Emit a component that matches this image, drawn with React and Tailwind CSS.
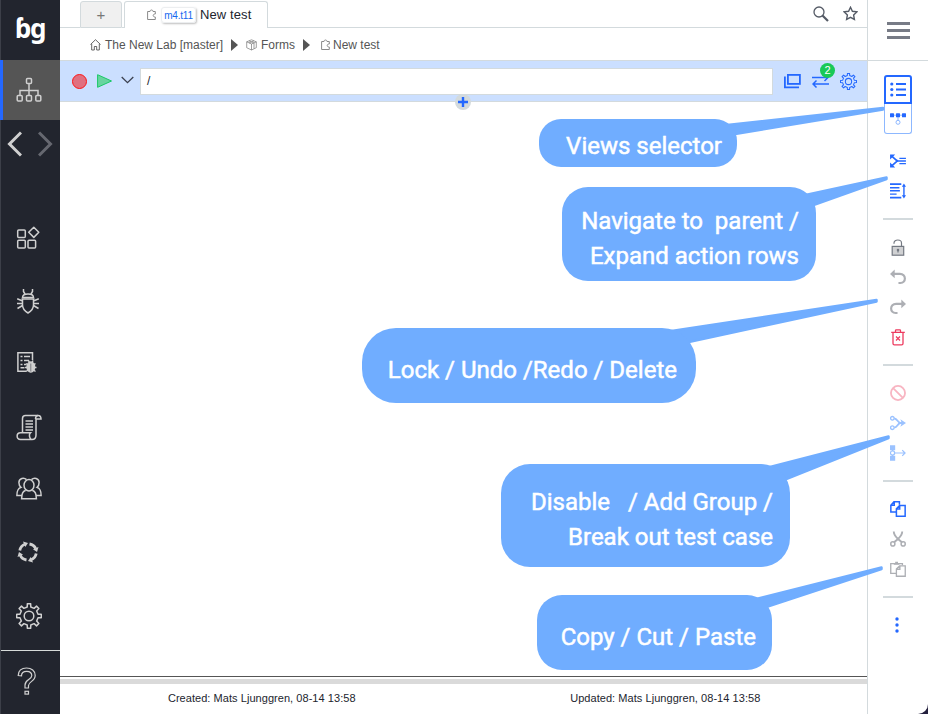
import React from "react";

const Svg = ({ w = 24, h = 24, vb, className = "", children, sw = 1.5 }) => (
  <svg
    width={w}
    height={h}
    viewBox={vb || `0 0 ${w} ${h}`}
    fill="none"
    stroke="currentColor"
    strokeWidth={sw}
    className={`block shrink-0 ${className}`}
  >
    {children}
  </svg>
);

const gearPath = (c, inner, outer, teeth) => {
  const pts = [];
  const step = (Math.PI * 2) / teeth;
  for (let i = 0; i < teeth; i++) {
    const a = i * step - Math.PI / 2;
    [
      [-0.25, inner],
      [-0.17, outer],
      [0.17, outer],
      [0.25, inner],
    ].forEach(([f, r]) => {
      pts.push(`${(c + Math.cos(a + f * step) * r).toFixed(2)} ${(c + Math.sin(a + f * step) * r).toFixed(2)}`);
    });
  }
  return `M${pts.join("L")}Z`;
};

const Sitemap = () => (
  <Svg w={26} h={26}>
    <rect x="10.5" y="1.5" width="5" height="5" rx="1" />
    <rect x="1.2" y="18.5" width="5" height="5.5" rx="1" />
    <rect x="10.5" y="18.5" width="5" height="5.5" rx="1" />
    <rect x="19.8" y="18.5" width="5" height="5.5" rx="1" />
    <path d="M13 7v11M4 18v-4.500h18V18" />
  </Svg>
);

const Blocks = () => (
  <Svg w={24} h={24}>
    <rect x="1.7" y="4" width="7.6" height="7.6" rx="1" />
    <rect x="1.7" y="14.3" width="7.6" height="7.6" rx="1" />
    <rect x="12" y="14.3" width="7.6" height="7.6" rx="1" />
    <path d="M17.8 1.2L22.8 6.3L17.8 11.4L12.7 6.3Z" strokeLinejoin="round" />
  </Svg>
);

const Bug = () => (
  <Svg w={24} h={26}>
    <path d="M7.500 1v2.500L9 6M16.500 1v2.500L15 6M6.500 9.500C6.500 4.800 17.500 4.800 17.500 9.500Z" />
    <path d="M5.500 11h13M6.500 11v6c0 4 3 6.500 5.500 8c2.500-1.500 5.500-4 5.500-8v-6" />
    <path d="M6 12.800L1.200 10.800M6.500 15.500H1M6.500 17.500L1.500 20.500M18 12.800L22.800 10.800M17.500 15.500H23M17.500 17.500L22.500 20.500" />
  </Svg>
);

const ReportBug = () => (
  <Svg w={22} h={23}>
    <path d="M10 20.200H1.900V1.800h14.600V9" />
    <path d="M4.500 5.500h2M8 5.500h6M4.500 9.500h2M8 9.500h5M4.500 13.500h2M8 13.500h2M4.500 16.800h4" />
    <ellipse cx="14.800" cy="16" rx="3.800" ry="4.900" fill="currentColor" />
    <path d="M12.500 9.500l1 2M17 9.500l-1 2M10 12.500l2 1.500M9 16.500h3M10 20.500l2-1.500M19.500 12.500l-2 1.500M20.500 16.500h-3M19.500 20.500l-2-1.500" />
    <path d="M14.800 12.500v8" stroke="#22252e" strokeWidth=".5" />
  </Svg>
);

const Scroll = () => (
  <Svg w={26} h={27}>
    <path d="M6.500 18.500V4.500C6.500 2.500 7.500 1.500 9.500 1.500H22c2 0 3 1.500 3 3.500h-5v16c0 3-1.500 4.500-4 4.500H4.500C0 25.500 0 18.700 4.500 18.700H14.500c-2 2-1 5 .5 6.500" />
    <path d="M19.500 5c0-2 .7-3.500 2.500-3.500M9.500 7h7.500M9.500 10h7.500M9.500 13h7.500M9.500 16h7.500" />
  </Svg>
);

const People = () => (
  <Svg w={26} h={23}>
    <ellipse cx="13" cy="8.300" rx="5" ry="5.700" />
    <path d="M9.700 13.200C6.800 14.500 5.800 16 5.600 21.700H20.400C20.200 16 19.200 14.500 16.300 13.200" />
    <path d="M10.500 2.600C8 .2 3 1 2.900 5.500C2.900 8 3.500 9.300 5 10.300C1.800 11.700.900 13.500.900 18.500H6M15.500 2.600C18 .2 23 1 23.100 5.500C23.100 8 22.500 9.300 21 10.300C24.200 11.700 25.100 13.500 25.100 18.500H20" />
  </Svg>
);

const Cycle = () => (
  <Svg w={22} h={22}>
    <g strokeWidth="2.800">
      <path d="M2.800 9.500C3.400 6.300 5.400 4.200 7.800 3.300" />
      <path d="M12.500 3C15.800 3.600 17.800 5.300 18.700 7.700" />
      <path d="M19.200 12.500C18.600 15.700 16.600 17.800 14.200 18.700" />
      <path d="M9.500 19C6.200 18.400 4.200 16.700 3.300 14.300" />
    </g>
    <g fill="currentColor" stroke="none">
      <path d="M6 .500L11 2L8.300 6Z" />
      <path d="M21.500 6L20 11L16 8.300Z" />
      <path d="M16 21.500L11 20L13.700 16Z" />
      <path d="M.500 16L2 11L6 13.700Z" />
    </g>
  </Svg>
);

const Gear = ({ size, sw }) => (
  <Svg w={size} h={size} vb="0 0 26 26" sw={sw}>
    <path d={gearPath(13, 9.2, 12.4, 8)} strokeLinejoin="round" />
    <circle cx="13" cy="13" r="4.800" />
  </Svg>
);

const Question = () => (
  <Svg w={20} h={28} sw={1.2}>
    <path d="M1.200 8.500C1.200 3.500 4.500 1 9.500 1C14.500 1 18.200 4 18.200 8.500C18.200 14.500 11.500 14.500 11.500 18.500V21H8V18C8 12.500 14.800 12.800 14.800 8.500C14.800 6 12.800 4.300 9.700 4.300C6.500 4.300 4.500 6 4.500 8.800Z" />
    <rect x="8" y="24.300" width="3.500" height="2.800" />
  </Svg>
);

const Puzzle = ({ className = "" }) => (
  <Svg w={10} h={12} sw={1} className={className}>
    <path d="M.600 2.500H3C3 .5 6 .5 6 2.500H8.300V5C5.500 4.800 5.500 8.200 8.300 8V10.500H.600Z" />
  </Svg>
);

const Crumb = () => (
  <svg width="7" height="12" viewBox="0 0 7 12" className="block">
    <path d="M0 0L7 6L0 12Z" fill="#555" />
  </svg>
);

const SideSlot = ({ className, children }) => (
  <div className={`flex shrink-0 items-center justify-center ${className}`}>{children}</div>
);

const ToolSlot = ({ className = "", children }) => (
  <div className={`flex h-[30px] items-center justify-center ${className}`}>{children}</div>
);

const Sidebar = () => (
  <aside className="flex w-[60px] shrink-0 flex-col border-l border-[#3c3f48] bg-[#22252e] text-[#d0d0d0]">
    <div className="flex h-[60px] items-center justify-center pr-px pb-[5px] font-['Noto_Sans',sans-serif] text-[26px] leading-none font-bold tracking-[-1.2px] text-white">
      ɓg
    </div>
    <div className="-ml-px flex h-[60px] items-center justify-center border-l-[3px] border-[#2468ff] bg-[#555] pr-[5px]">
      <Sitemap />
    </div>
    <div className="flex h-[47px] items-center justify-between pr-[7px] pl-[6px]">
      <Svg w={15} h={26} sw={3}>
        <path d="M14 1.500L2.500 13L14 24.500" />
      </Svg>
      <Svg w={15} h={26} sw={3} className="text-[#666870]">
        <path d="M1 1.500L12.500 13L1 24.500" />
      </Svg>
    </div>
    <SideSlot className="mt-[40px] mr-[5px] h-[62px]"><Blocks /></SideSlot>
    <SideSlot className="mr-[5px] h-[64px]"><Bug /></SideSlot>
    <SideSlot className="mr-[7px] h-[60px] pb-[2px]"><ReportBug /></SideSlot>
    <SideSlot className="mr-[3px] h-[68px]"><Scroll /></SideSlot>
    <SideSlot className="mr-[3px] h-[55px]"><People /></SideSlot>
    <SideSlot className="mr-[5px] h-[71px]"><Cycle /></SideSlot>
    <SideSlot className="mr-[3px] h-[57px]"><Gear size={26} sw={1.5} /></SideSlot>
    <div className="mt-[6px] flex flex-1 items-center justify-center border-t border-[#d7dbd9] pr-[8px] pb-[3px]">
      <Question />
    </div>
  </aside>
);

const Tabs = () => (
  <div className="flex h-7 shrink-0 items-end">
    <div className="h-full w-5 border-b border-[#d3dadd]" />
    <div className="flex h-[27px] w-[42px] items-center justify-center rounded-t-[3px] border border-[#d3dadd] bg-[#f0f0f0] pt-px text-[15px] text-[#777]">
      +
    </div>
    <div className="h-full w-0.5 border-b border-[#d3dadd]" />
    <div className="flex h-[27px] w-[144px] items-center rounded-t-[3px] border-x border-t border-[#d3dadd] pl-[22px]">
      <Puzzle className="text-[#8a8a8a]" />
      <span className="ml-[4px] flex h-4 w-[35px] items-center justify-center rounded-[3px] border border-[#eceef0] text-[10px] tracking-[-0.2px] text-[#1769ef] shadow-[1px_1px_2px_rgba(0,0,0,0.25)]">
        m4.t11
      </span>
      <span className="ml-[4px] text-[13px] tracking-[0.1px] whitespace-nowrap text-[#22252e]">New test</span>
    </div>
    <div className="flex h-full flex-1 items-center justify-end gap-[14px] border-b border-[#d3dadd] pr-[9px] text-[#555b66]">
      <Svg w={16} h={16}>
        <circle cx="6" cy="6" r="5" strokeWidth="1.300" />
        <path d="M9.500 9.500L15 15" strokeWidth="2.200" />
      </Svg>
      <Svg w={15} h={15} sw={1.4}>
        <path d="M7.500 1.300L9.400 5.300L13.800 5.900L10.600 9L11.400 13.400L7.500 11.300L3.600 13.400L4.400 9L1.200 5.900L5.600 5.300Z" />
      </Svg>
    </div>
  </div>
);

const Breadcrumbs = () => (
  <div className="flex h-8 shrink-0 items-center pt-px pl-[30px] text-[12px] whitespace-nowrap text-[#555]">
    <Svg w={11} h={12} sw={0.9} className="mr-1">
      <path d="M.500 5.500L5.500.700L10.500 5.500M1.700 5v6h2.600V7.500h2.400V11h2.600V5" />
    </Svg>
    <span className="w-[126px]">The New Lab [master]</span>
    <Crumb />
    <Svg w={11} h={12} sw={0.7} className="mr-1 ml-[8px] text-[#777]">
      <path d="M5.500.800L10.300 2.800V8.700L5.500 11L.700 8.700V2.800ZM.700 2.800L5.500 5L10.300 2.800M5.500 5V11M3 1.800L8 4V9.500M8 1.800L3 4" />
    </Svg>
    <span className="w-[42px]">Forms</span>
    <Crumb />
    <Puzzle className="ml-[11px] text-[#8a8a8a]" />
    <span className="ml-[2px]">New test</span>
  </div>
);

const CommandBar = () => (
  <div className="relative flex h-[42px] shrink-0 items-center border-y border-[#d3dadd] bg-[#cbdfff] pl-[12px] text-[#2468ff]">
    <span className="size-[15px] rounded-full border border-[#ff1414] bg-[#e07080]" />
    <Svg w={16} h={14} sw={1} className="ml-[10px] text-[#19c866]">
      <path d="M.600.700L14.500 7L.600 13.300Z" fill="#68d4a0" />
    </Svg>
    <Svg w={13} h={8} sw={1.3} className="-mt-[2px] ml-[8px] text-[#3b4150]">
      <path d="M.700 1L6.500 6.700L12.300 1" />
    </Svg>
    <div className="ml-[6px] flex h-[27px] w-[633px] items-center border border-[#d3dadd] bg-white pl-[6px] text-[12px] text-[#22252e]">
      /
    </div>
    <Svg w={17} h={15} sw={1.8} className="ml-[11px]">
      <rect x="3.900" y=".900" width="12" height="9" />
      <path d="M.900 2.500V13.300H15" />
    </Svg>
    <div className="relative ml-[11px]">
      <Svg w={17} h={14} sw={1.5}>
        <path d="M0 3.500H16M12.500 0L16 3.500L12.500 7M17 10H1M4.500 6.500L1 10L4.500 13.500" />
      </Svg>
      <span className="absolute -top-[11px] left-[8px] flex size-[15px] items-center justify-center rounded-full bg-[#19c957] text-[11px] text-white">
        2
      </span>
    </div>
    <div className="ml-[11px]"><Gear size={17} sw={1.6} /></div>
    <span className="absolute top-[33px] left-[395px] z-10 flex size-4 items-center justify-center rounded-full bg-[#d3dadd]">
      <Svg w={10} h={10} sw={2.4}><path d="M5 0v10M0 5h10" /></Svg>
    </span>
  </div>
);

const Divider = ({ className }) => <div className={`h-0.5 w-[30px] bg-[#d3dadd] ${className}`} />;

const Toolbar = () => (
  <aside className="flex w-[61px] shrink-0 flex-col items-center rounded-br-[10px] border-l border-[#d3dadd] bg-white text-[#2468ff]">
    <div className="flex h-[61px] w-full flex-col items-center justify-center gap-1 border-b border-[#d3dadd]">
      <i className="h-[3px] w-[23px] bg-[#777b86]" />
      <i className="h-[3px] w-[23px] bg-[#777b86]" />
      <i className="h-[3px] w-[23px] bg-[#777b86]" />
    </div>
    <div className="mt-[14px] flex h-[29px] w-7 items-center justify-center rounded-t-[3px] border-2 border-[#2468ff]">
      <Svg w={16} h={15} sw={2}>
        <path d="M6 2H16M6 7.500H16M6 13H16" />
        <g fill="currentColor" stroke="none">
          <circle cx="1.800" cy="2" r="1.600" /><circle cx="1.800" cy="7.500" r="1.600" /><circle cx="1.800" cy="13" r="1.600" />
        </g>
      </Svg>
    </div>
    <div className="flex h-[30px] w-7 items-center justify-center rounded-b-[3px] border-x border-b border-[#8db8ff]">
      <Svg w={16} h={14} sw={1} className="text-[#8db8ff]">
        <path d="M1 3.200H15M8 3V8" />
        <circle cx="8" cy="10.300" r="2" />
        <g fill="#2468ff" stroke="none">
          <rect x="0" y="1.300" width="4" height="4" rx=".5" /><rect x="6" y="1.300" width="4" height="4" rx=".5" /><rect x="12" y="1.300" width="4" height="4" rx=".5" />
        </g>
      </Svg>
    </div>
    <ToolSlot className="mt-[12px]">
      <Svg w={16} h={14} vb="0 0 17 15" sw={1.8}>
        <path d="M1.500 2L6 6C7 7 7.500 7.500 9 7.500M1.500 13L6 9C7 8 7.500 7.500 9 7.500M6 7.500H17" />
        <path d="M10 4.700H17M10 10.300H17" strokeWidth="1.500" />
        <path d="M0 .500H5.500L0 6ZM0 14.500H5.500L0 9Z" fill="currentColor" stroke="none" />
      </Svg>
    </ToolSlot>
    <ToolSlot>
      <Svg w={16} h={16} vb="0 0 17 17" sw={1.5}>
        <path d="M0 1.200H12M0 15.500H12" strokeWidth="1.900" />
        <path d="M0 5H10M0 8.300H10.500M0 11.800H7M14.800 2V15" />
        <path d="M12.600 4L14.800 .5L17 4ZM12.600 13L14.800 16.500L17 13Z" fill="currentColor" stroke="none" />
      </Svg>
    </ToolSlot>
    <Divider className="mt-[12px]" />
    <ToolSlot className="mt-[12px] text-[#747982]">
      <Svg w={14} h={17} sw={1.2}>
        <rect x="1.200" y="7.400" width="11.500" height="8.800" fill="#d0d1d3" />
        <path d="M3 4.800V4C3 0 10.500 0 10.500 4V7.500M7 10v3.500" />
        <circle cx="7" cy="11" r=".7" fill="currentColor" />
      </Svg>
    </ToolSlot>
    <ToolSlot className="text-[#adafb4]">
      <Svg w={16} h={16} vb="0 0 17 17" sw={2.3}>
        <path d="M3 5.200H10.500C17.500 5.200 17.500 14.900 11 14.900H9" />
        <path d="M0 5.200L5 .500V9.900Z" fill="currentColor" stroke="none" />
      </Svg>
    </ToolSlot>
    <ToolSlot className="text-[#adafb4]">
      <Svg w={16} h={16} vb="0 0 17 17" sw={2.3}>
        <path d="M14 5.200H6.500C-.500 5.200-.500 14.900 6 14.900H8" />
        <path d="M17 5.200L12 .500V9.900Z" fill="currentColor" stroke="none" />
      </Svg>
    </ToolSlot>
    <ToolSlot className="text-[#ed3b5f]">
      <Svg w={14} h={17} sw={1.3}>
        <path d="M.200 3.300H13.800M4.500 3V1.500Q4.500 .8 5.200 .8H8.800Q9.500 .8 9.500 1.500V3M2 4V14.500Q2 15.900 3.400 15.900H10.600Q12 15.900 12 14.500V4" />
        <path d="M5 7.500L9 11.500M9 7.500L5 11.500" strokeWidth="1.200" />
      </Svg>
    </ToolSlot>
    <Divider className="mt-[12px]" />
    <ToolSlot className="mt-[12px] text-[#f8b5c2]">
      <Svg w={16} h={16} vb="0 0 17 17" sw={1.9}>
        <circle cx="8.500" cy="8.500" r="7.500" />
        <path d="M3.300 3.300L13.700 13.700" />
      </Svg>
    </ToolSlot>
    <ToolSlot className="text-[#9bc2ff]">
      <Svg w={16} h={16} vb="0 0 17 17" sw={1.4}>
        <circle cx="2.500" cy="3.500" r="1.900" /><circle cx="2.500" cy="13.500" r="1.900" />
        <path d="M4.500 3.500C8 4 8 8 11 8.500H14M4.500 13.500C8 13 8 9 11 8.500" strokeWidth="1.900" />
        <path d="M11 4.500L17 8.500L11 12.500L12.500 8.500Z" fill="currentColor" stroke="none" />
      </Svg>
    </ToolSlot>
    <ToolSlot className="text-[#9bc2ff]">
      <Svg w={16} h={16} vb="0 0 17 17" sw={1.3}>
        <path d="M0 .300H5.500V5.500H0ZM0 11.500H5.500V16.700H0Z" fill="currentColor" stroke="none" />
        <path d="M2.700 5V12" />
        <circle cx="2.700" cy="8.500" r="2.200" fill="#fff" />
        <path d="M5 8.500H16M13 5.500L16 8.500L13 11.500" />
      </Svg>
    </ToolSlot>
    <Divider className="mt-[12px]" />
    <ToolSlot className="mt-[12px]">
      <Svg w={16} h={16} vb="0 0 17 17" sw={1.6}>
        <path d="M6.500 11.800H.900V4.500L4.200.900H10V4M1 4.500H4.500V1" />
        <path d="M6.800 8.200L10.200 4.700H16.100V16.100H6.800ZM6.800 8.500H10.300V4.700" />
      </Svg>
    </ToolSlot>
    <ToolSlot className="text-[#adafb4]">
      <Svg w={16} h={16} vb="0 0 17 17" sw={1.6}>
        <path d="M4 .500C4 3 5.500 5.500 8.500 8.500L13 12.200M13 .500C13 3 11.500 5.500 8.500 8.500L4 12.200" strokeWidth="2" />
        <circle cx="3" cy="13.700" r="2.200" /><circle cx="14" cy="13.700" r="2.200" />
      </Svg>
    </ToolSlot>
    <ToolSlot className="text-[#adafb4]">
      <Svg w={16} h={16} vb="0 0 17 17" sw={1.4}>
        <path d="M6.500 13.200H.800V2.700H13.200V4.500" />
        <path d="M4 2.200H5.500V.700H8.500V2.200H10V4H4Z" fill="currentColor" stroke="none" />
        <path d="M6.800 8.500L10.200 5.200H16.200V16.200H6.800ZM6.800 8.800H10.500V5.200" fill="#fff" />
      </Svg>
    </ToolSlot>
    <Divider className="mt-[12px]" />
    <ToolSlot className="mt-[12px] pr-[2px]">
      <Svg w={4} h={16}>
        <g fill="currentColor" stroke="none">
          <circle cx="2" cy="2" r="1.700" /><circle cx="2" cy="8" r="1.700" /><circle cx="2" cy="14" r="1.700" />
        </g>
      </Svg>
    </ToolSlot>
  </aside>
);

/* Speech-bubble pointers that reach from each callout to its tool group. */
const Pointers = () => (
  <svg className="pointer-events-none absolute inset-0" width="928" height="714" viewBox="0 0 928 714">
    <g fill="#70adff" stroke="#70adff" strokeWidth="2.500" strokeLinejoin="round">
      <path d="M718 126L883 108L883 109.500L726 135.500Z" />
      <path d="M794 197.500L886.500 177.500L886.500 179L798 210.500Z" />
      <path d="M655 333.500L876.500 300L876.500 301.500L668 346.500Z" />
      <path d="M758 470L888.500 436.500L888.500 438L770 485.500Z" />
      <path d="M740 603L881.500 567.500L881.500 569L750 612.500Z" />
    </g>
  </svg>
);

const Callout = ({ className, children }) => (
  <div
    className={`absolute flex flex-col items-end bg-[#70adff] font-['Roboto',sans-serif] text-[24px] leading-[35px] font-normal whitespace-pre text-white [-webkit-text-stroke:0.5px_white] ${className}`}
  >
    {children}
  </div>
);

export default function App() {
  return (
    <div className="relative flex h-[714px] w-[928px] overflow-hidden bg-[#231f3d] font-['Liberation_Sans',Arial,sans-serif]">
      <Sidebar />
      <main className="flex w-[807px] flex-col bg-white">
        <Tabs />
        <Breadcrumbs />
        <CommandBar />
        <div className="flex-1" />
        <footer className="h-[38px] shrink-0 border-t border-[#555]">
          <div className="mt-0.5 h-[5px] bg-[#dadada]" />
          <div className="flex h-7 items-center text-[11px] tracking-[0.05px] text-[#22252e]">
            <span className="flex-1 text-center">Created: Mats Ljunggren, 08-14 13:58</span>
            <span className="flex-1 text-center">Updated: Mats Ljunggren, 08-14 13:58</span>
          </div>
        </footer>
      </main>
      <Toolbar />
      <Pointers />
      <Callout className="top-[119px] left-[539px] h-[48px] w-[198px] rounded-[22px] pt-[10px] pr-[15px]">
        <span>Views selector</span>
      </Callout>
      <Callout className="top-[187px] left-[562px] h-[94px] w-[254px] rounded-[26px] pt-[17px] pr-[17px]">
        <span>Navigate to  parent /</span>
        <span>Expand action rows</span>
      </Callout>
      <Callout className="top-[328px] left-[362px] h-[75px] w-[334px] rounded-[34px] pt-[25px] pr-[19px]">
        <span>Lock / Undo /Redo / Delete</span>
      </Callout>
      <Callout className="top-[464px] left-[501px] h-[103px] w-[289px] rounded-[29px] pt-[21px] pr-[17px]">
        <span>Disable   / Add Group /</span>
        <span>Break out test case</span>
      </Callout>
      <Callout className="top-[595px] left-[537px] h-[75px] w-[235px] rounded-[25px] pt-[25px] pr-[16px]">
        <span>Copy / Cut / Paste</span>
      </Callout>
    </div>
  );
}
